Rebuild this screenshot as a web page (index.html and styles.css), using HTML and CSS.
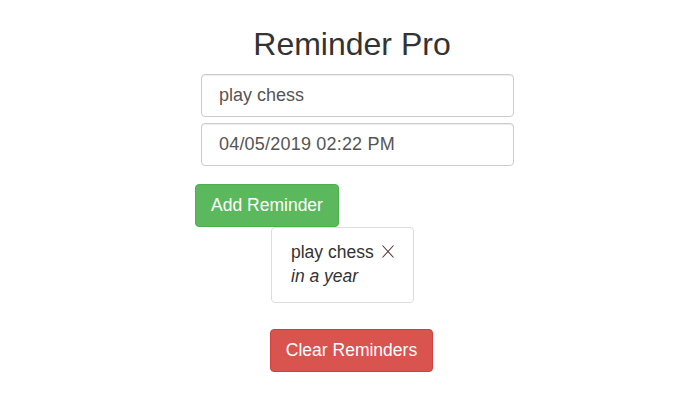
FILE: index.html
```html
<!DOCTYPE html>
<html>
<head>
<meta charset="utf-8">
<link rel="stylesheet" href="styles.css">
</head>
<body>
<div class="app">
  <h1 class="title">Reminder Pro</h1>
  <div class="form">
    <input class="field" type="text" value="play chess">
    <input class="field field-date" type="text" value="04/05/2019 02:22 PM">
  </div>
  <button class="btn btn-add" type="button">Add Reminder</button>
  <ul class="reminders">
    <li class="reminder">
      <div class="reminder-text">play chess <span class="remove"><svg width="12" height="13" viewBox="0 0 12 13"><path d="M0.5 0.5 L11.5 12.5 M11.5 0.5 L0.5 12.5" stroke="#5b3b36" stroke-width="1.1" fill="none"/></svg></span></div>
      <div class="reminder-when"><em>in a year</em></div>
    </li>
  </ul>
  <button class="btn btn-clear" type="button">Clear Reminders</button>
</div>
</body>
</html>
```

FILE: styles.css
```css
html, body {
  margin: 0;
  padding: 0;
  background: #fff;
}

.app {
  display: flex;
  flex-direction: column;
  align-items: flex-start;
  font-family: "Liberation Sans", Arial, sans-serif;
  color: #333;
}

.title {
  align-self: stretch;
  margin: 26px 0 12px;
  padding-left: 20px;
  text-align: center;
  font-size: 32px;
  font-weight: normal;
  line-height: 36px;
  color: #333;
}

.form {
  display: flex;
  flex-direction: column;
  gap: 6px;
  margin-left: 201px;
}

.field {
  box-sizing: border-box;
  width: 313px;
  height: 43px;
  margin: 0;
  padding: 0 17px;
  border: 1px solid #ccc;
  border-radius: 4px;
  box-shadow: inset 0 1px 1px rgba(0, 0, 0, 0.075);
  font-family: "Liberation Sans", Arial, sans-serif;
  font-size: 18px;
  color: #555;
  background: #fff;
}

.field-date {
  letter-spacing: 0.2px;
}

.btn {
  box-sizing: border-box;
  height: 43px;
  margin: 0;
  border: 1px solid transparent;
  border-radius: 4px;
  font-family: "Liberation Sans", Arial, sans-serif;
  font-size: 17.5px;
  color: #fff;
  cursor: pointer;
}

.btn-add {
  margin-top: 18px;
  margin-left: 195px;
  width: 144px;
  padding: 0;
  background: #5cb85c;
  border-color: #4cae4c;
}

.reminders {
  list-style: none;
  margin: 0 0 0 271px;
  padding: 0;
}

.reminder {
  box-sizing: border-box;
  width: 143px;
  padding: 12px 19px 14px;
  border: 1px solid #ddd;
  border-radius: 4px;
  font-size: 17.5px;
  line-height: 24px;
  color: #333;
}

.remove {
  display: inline-block;
  margin-left: 3px;
  vertical-align: 0;
}

.remove svg {
  display: block;
}

.btn-clear {
  margin-top: 26px;
  margin-left: 270px;
  width: 163px;
  padding: 0;
  background: #d9534f;
  border-color: #d43f3a;
}
```
